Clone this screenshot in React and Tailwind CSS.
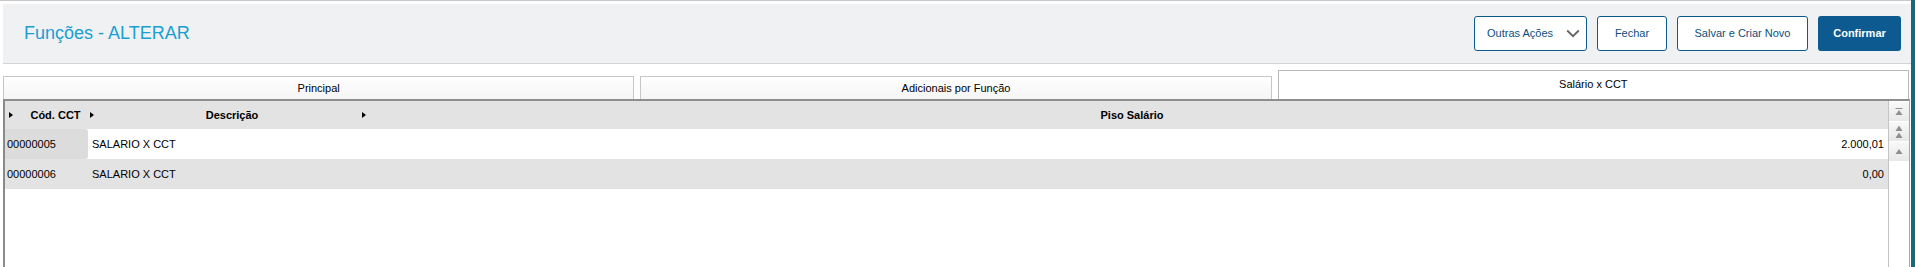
import React from "react";

function Tri() {
  return (
    <span className="inline-block w-0 h-0 border-t-[3.5px] border-b-[3.5px] border-l-[4px] border-t-transparent border-b-transparent border-l-black" />
  );
}

function ScrollBtn({ children }) {
  return (
    <div className="h-[19px] w-full flex items-center justify-center bg-gradient-to-b from-[#f8f8f8] to-[#e8e8e8]">
      {children}
    </div>
  );
}

export default function App() {
  return (
    <div className="w-[1915px] h-[267px] bg-white overflow-hidden flex font-['Liberation_Sans',Arial,sans-serif] text-[11px] text-black">
      <div className="w-[1911px] h-full flex flex-col">
        <div className="h-px bg-[#c8c8c8]" />
        <div className="h-[3px]" />
        {/* Header */}
        <div className="ml-[3px] h-[60px] bg-[#f0f1f2] border-b border-[#d3d4d5] flex items-center justify-between pl-[21px] pr-[10px]">
          <div className="text-[18px] text-[#1a9fd3] leading-none -mt-[2px]">Funções - ALTERAR</div>
          <div className="flex items-center gap-[10px]">
            <button className="w-[113px] h-[35px] rounded-[3px] border border-[#0d5a8c] bg-white flex items-center justify-between pl-[12px] pr-[6px] text-[#0b4f80] text-[11px]">
              <span>Outras Ações</span>
              <svg width="14" height="9" viewBox="0 0 14 9">
                <path d="M1.2 1.5 L7 7.2 L12.8 1.5" fill="none" stroke="#666" strokeWidth="1.8" />
              </svg>
            </button>
            <button className="w-[70px] h-[35px] rounded-[3px] border border-[#0d5a8c] bg-white flex items-center justify-center text-[#0b4f80] text-[11px]">
              Fechar
            </button>
            <button className="w-[131px] h-[35px] rounded-[3px] border border-[#0d5a8c] bg-white flex items-center justify-center text-[#0b4f80] text-[11px]">
              Salvar e Criar Novo
            </button>
            <button className="w-[83px] h-[35px] rounded-[3px] bg-[#0c5a8f] flex items-center justify-center text-white font-bold text-[11px]">
              Confirmar
            </button>
          </div>
        </div>
        <div className="h-[6px]" />
        {/* Tabs */}
        <div className="h-[29px] pl-[3px] pr-[2px] flex items-end gap-[6px]">
          <div className="flex-1 h-[23px] border border-b-0 border-[#c6c6c6] bg-gradient-to-b from-white to-[#f5f5f5] flex items-center justify-center text-black">
            Principal
          </div>
          <div className="flex-1 h-[23px] border border-b-0 border-[#c6c6c6] bg-gradient-to-b from-white to-[#f5f5f5] flex items-center justify-center text-black">
            Adicionais por Função
          </div>
          <div className="flex-1 h-[29px] border border-b-0 border-[#b8b8b8] bg-white flex items-center justify-center text-black pb-[2px]">
            Salário x CCT
          </div>
        </div>
        {/* Table */}
        <div className="flex-1 ml-[3px] mr-[1px] border-l-2 border-t-2 border-r border-l-[#8a8a8a] border-t-[#8e8e8e] border-r-[#a8a8a8] flex">
          <div className="flex-1 flex flex-col">
            <div className="h-[28px] bg-[#e3e3e3] flex font-bold">
              <div className="w-[83px] flex items-center">
                <div className="w-[18px] pl-[4px] flex items-center"><Tri /></div>
                <div className="flex-1 text-center">Cód. CCT</div>
              </div>
              <div className="w-[270px] flex items-center">
                <div className="w-[18px] pl-[2px] flex items-center"><Tri /></div>
                <div className="flex-1 text-center">Descrição</div>
              </div>
              <div className="flex-1 flex items-center">
                <div className="w-[18px] pl-[4px] flex items-center"><Tri /></div>
                <div className="flex-1 text-center">Piso Salário</div>
              </div>
            </div>
            <div className="h-[30px] bg-white flex items-center">
              <div className="w-[83px] h-full bg-[#dcdcdc] rounded-r-[3px] flex items-center pl-[2px]">00000005</div>
              <div className="w-[270px] pl-[4px]">SALARIO X CCT</div>
              <div className="flex-1 text-right pr-[4px]">2.000,01</div>
            </div>
            <div className="h-[30px] bg-[#e3e3e3] flex items-center">
              <div className="w-[83px] pl-[2px]">00000006</div>
              <div className="w-[270px] pl-[4px]">SALARIO X CCT</div>
              <div className="flex-1 text-right pr-[4px]">0,00</div>
            </div>
          </div>
          <div className="w-[21px] border-l border-[#c4c4c4] bg-white flex flex-col gap-px pt-px">
            <ScrollBtn>
              <svg width="8" height="8" viewBox="0 0 8 8">
                <rect x="0.5" y="0" width="7" height="1" fill="#8f8f8f" />
                <path d="M4 2 L7.5 7 L0.5 7 Z" fill="#8f8f8f" />
              </svg>
            </ScrollBtn>
            <ScrollBtn>
              <svg width="8" height="14" viewBox="0 0 8 14">
                <path d="M4 0.5 L7.5 6 L0.5 6 Z" fill="#8f8f8f" />
                <path d="M4 7.5 L7.5 13 L0.5 13 Z" fill="#8f8f8f" />
              </svg>
            </ScrollBtn>
            <ScrollBtn>
              <svg width="8" height="5" viewBox="0 0 8 5">
                <path d="M4 0 L7.5 5 L0.5 5 Z" fill="#8f8f8f" />
              </svg>
            </ScrollBtn>
          </div>
        </div>
      </div>
      <div className="w-[4px] h-full bg-[#17697b]" />
    </div>
  );
}
